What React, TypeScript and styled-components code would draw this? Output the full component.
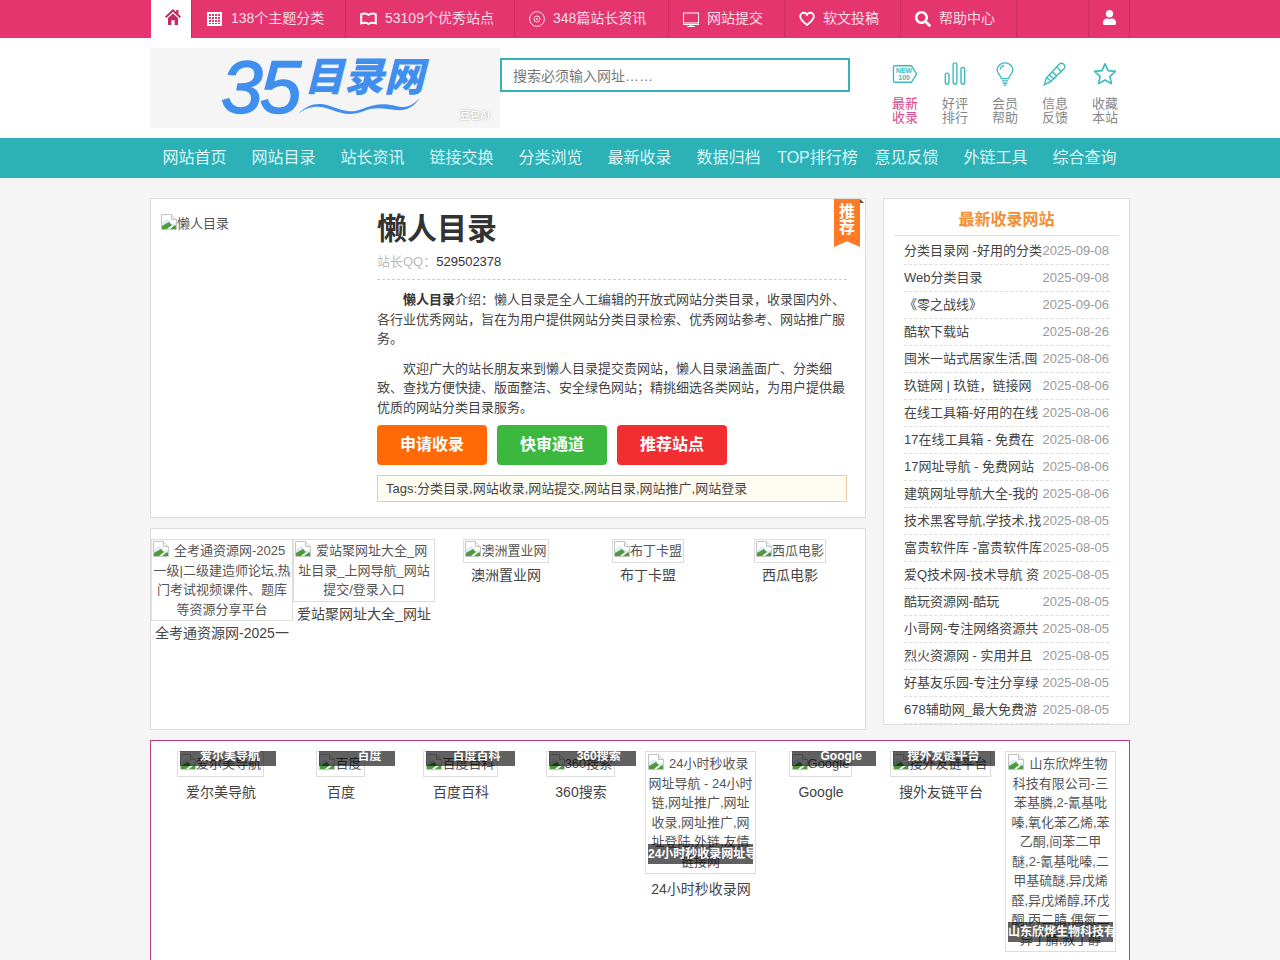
import React from 'react';
import styled, { createGlobalStyle } from 'styled-components';
import { FaSearch, FaUser } from 'react-icons/fa';

const GlobalStyle = createGlobalStyle`
  * { box-sizing: border-box; }
  html, body { margin: 0; padding: 0; }
  body {
    background: #f5f5f5;
    color: #333;
    font: 13px/19.5px "Liberation Sans", "Noto Sans CJK SC", sans-serif;
  }
`;

const Wrap = styled.div`
  width: 980px;
  margin: 0 auto;
`;

const TopBar = styled.div`
  height: 38px;
  background: #e5356f;
`;

const TopRow = styled(Wrap)`
  display: flex;
  height: 38px;
`;

const HomeTab = styled.a`
  width: 40px;
  margin-left: 1px;
  background: #fff;
  display: flex;
  justify-content: center;
  padding: 9px 0 0 4px;
`;

const TopItem = styled.a<{ $width: number; $first?: boolean }>`
  display: flex;
  align-items: center;
  gap: 8px;
  width: ${(p) => p.$width}px;
  height: 38px;
  padding-left: ${(p) => (p.$first ? 15 : 14)}px;
  border-left: 1px solid #c92c60;
  font-size: 14px;
  color: #fbdde7;
  white-space: nowrap;
  svg { display: block; flex: none; }
`;

const TopSpacer = styled.div`
  flex: 1;
  border-left: 1px solid #c92c60;
`;

const UserItem = styled.a`
  width: 42px;
  border-left: 1px solid #c92c60;
  border-right: 1px solid #c92c60;
  color: #fff;
  display: flex;
  justify-content: center;
  padding-top: 10px;
  font-size: 15px;
`;

const Header = styled.div`
  background: #fff;
  height: 100px;
`;

const HeaderRow = styled(Wrap)`
  display: flex;
  align-items: flex-start;
`;

const Logo = styled.a`
  position: relative;
  display: block;
  width: 350px;
  height: 80px;
  margin-top: 10px;
  background: #f5f5f5;
  overflow: hidden;
`;

const LogoNumber = styled.span`
  position: absolute;
  left: 71px;
  top: -1px;
  font: italic 400 75px/80px "Liberation Sans", sans-serif;
  letter-spacing: -3px;
  color: #408fee;
  -webkit-text-stroke: 1.5px #408fee;
`;

const LogoWords = styled.span`
  position: absolute;
  left: 154px;
  top: 4px;
  font: italic 900 40px/44px "Noto Sans CJK SC", sans-serif;
  color: #408fee;
`;

const LogoWave = styled.svg`
  position: absolute;
  left: 148px;
  top: 48px;
`;

const LogoMark = styled.span`
  position: absolute;
  right: 10px;
  bottom: 6px;
  font-size: 10px;
  line-height: 12px;
  font-weight: 700;
  color: #fff;
  text-shadow: 0 0 2px #999;
`;

const SearchInput = styled.input`
  width: 350px;
  height: 34px;
  margin-top: 20px;
  padding: 1px 11px 0;
  border: 2px solid #33b3b9;
  background: #fff;
  outline: none;
  font: 14px "Liberation Sans", "Noto Sans CJK SC", sans-serif;
  &::placeholder { color: #777; opacity: 1; }
`;

const QuickLinks = styled.div`
  display: flex;
  margin-left: 30px;
`;

const QuickLink = styled.a<{ $active?: boolean }>`
  width: 50px;
  padding-top: 24px;
  display: flex;
  flex-direction: column;
  align-items: center;
  font-size: 13px;
  line-height: 14px;
  text-align: center;
  color: ${(p) => (p.$active ? '#d9488c' : '#888')};
  svg { display: block; margin-bottom: 11px; }
`;

const NavBar = styled.div`
  height: 40px;
  background: #2cb1b6;
`;

const NavRow = styled(Wrap)`
  display: flex;
`;

const NavItem = styled.a`
  width: 89px;
  flex: none;
  font-size: 16px;
  line-height: 40px;
  text-align: center;
  white-space: nowrap;
  color: #dcf6f6;
`;

const Columns = styled(Wrap)`
  display: flex;
  align-items: flex-start;
  gap: 17px;
  margin-top: 20px;
`;

const MainColumn = styled.div`
  width: 716px;
  display: flex;
  flex-direction: column;
  gap: 10px;
`;

const Card = styled.div`
  position: relative;
  background: #fff;
  border: 1px solid #ddd;
`;

const SiteCard = styled(Card)`
  display: flex;
  height: 320px;
  padding: 10px 18px 0 10px;
`;

const SiteThumb = styled.div`
  width: 216px;
  padding-top: 5px;
  color: #555;
  svg { vertical-align: top; }
`;

const SiteInfo = styled.div`
  width: 470px;
`;

const SiteTitle = styled.h1`
  margin: 0;
  font-size: 30px;
  line-height: 40px;
  font-weight: 700;
  color: #333;
`;

const SiteMeta = styled.div`
  margin-top: 3px;
  padding-bottom: 7px;
  border-bottom: 1px dashed #ccc;
  line-height: 20px;
  color: #bbb;
  b { font-weight: 400; color: #333; }
`;

const Intro = styled.p`
  margin: 10px 0 0;
  text-indent: 2em;
  color: #444;
  b { color: #333; }
`;

const Buttons = styled.div`
  display: flex;
  gap: 10px;
  margin-top: 8px;
`;

const ActionButton = styled.a<{ $color: string }>`
  width: 110px;
  height: 40px;
  border-radius: 4px;
  background: ${(p) => p.$color};
  color: #fff;
  font-size: 16px;
  font-weight: 700;
  line-height: 40px;
  text-align: center;
`;

const Tags = styled.div`
  height: 27px;
  margin-top: 10px;
  padding: 0 8px;
  border: 1px solid #e6cf98;
  background: #fffdf2;
  line-height: 25px;
  color: #444;
`;

const Ribbon = styled.div`
  position: absolute;
  top: 0;
  right: 5px;
  width: 26px;
  height: 48px;
  padding-top: 5px;
  background: #ff7a26;
  clip-path: polygon(0 0, 100% 0, 100% 100%, 50% 88%, 0 100%);
  color: #fff;
  font-size: 16px;
  line-height: 16px;
  font-weight: 700;
  text-align: center;
`;

const RibbonFold = styled.div`
  position: absolute;
  top: 0;
  right: 1px;
  width: 0;
  height: 0;
  border-bottom: 4px solid #555;
  border-right: 4px solid transparent;
`;

const TileRow = styled(Card)`
  display: flex;
  align-items: flex-start;
  height: 202px;
  padding-top: 10px;
`;

const Tile = styled.a<{ $width: number }>`
  width: ${(p) => p.$width}px;
  flex: none;
  display: flex;
  flex-direction: column;
  align-items: center;
  text-align: center;
`;

const Thumb = styled.div<{ $tight?: boolean; $width?: number }>`
  position: relative;
  width: ${(p) => (p.$width ? `${p.$width}px` : 'auto')};
  margin-right: ${(p) => (p.$tight ? 0 : 1)}px;
  padding: ${(p) => (p.$tight ? '1px' : '2px')};
  border: 1px solid #ddd;
  color: #555;
  svg { vertical-align: top; }
`;

const FirstLine = styled.span<{ $trail: number }>`
  margin-right: ${(p) => p.$trail}px;
  white-space: nowrap;
  svg { margin-right: 5px; }
`;

const TileName = styled.div<{ $offset: number }>`
  width: 134px;
  margin-top: ${(p) => p.$offset}px;
  font-size: 14px;
  line-height: 24px;
  height: 24px;
  overflow: hidden;
  color: #444;
`;

const FriendPanel = styled.div`
  display: flex;
  align-items: flex-start;
  width: 980px;
  min-height: 300px;
  margin: 10px auto 0;
  padding: 10px;
  background: #fff;
  border: 1px solid #b93a7e;
`;

const TopCaption = styled.div<{ $width: number; $indent: number }>`
  position: absolute;
  top: -1px;
  left: 2px;
  width: ${(p) => p.$width}px;
  height: 15px;
  padding-left: ${(p) => p.$indent}px;
  overflow: hidden;
  background: rgba(0, 0, 0, 0.62);
  color: #fff;
  font-size: 12px;
  font-weight: 700;
  line-height: 10px;
  text-align: left;
  white-space: nowrap;
`;

const BottomCaption = styled.div`
  position: absolute;
  bottom: 9px;
  left: 2px;
  width: 105px;
  height: 20px;
  overflow: hidden;
  background: rgba(0, 0, 0, 0.62);
  color: #fff;
  font-size: 12px;
  font-weight: 700;
  line-height: 20px;
  text-align: left;
  white-space: nowrap;
`;

const Sidebar = styled.div`
  width: 247px;
  height: 527px;
  background: #fff;
  border: 1px solid #ddd;
`;

const SidebarTitle = styled.h3`
  height: 37px;
  margin: 0 10px 2px;
  border-bottom: 1px solid #ddd;
  color: #f58d33;
  font-size: 16px;
  font-weight: 700;
  line-height: 41px;
  text-align: center;
`;

const LatestRow = styled.a`
  display: flex;
  justify-content: space-between;
  height: 27px;
  margin: 0 20px;
  border-bottom: 1px dashed #ddd;
  line-height: 26px;
  color: #444;
`;

const LatestName = styled.span`
  width: 138px;
  height: 26px;
  overflow: hidden;
`;

const LatestDate = styled.span`
  color: #999;
`;

const Broken = () => (
  <svg width="16" height="16" viewBox="0 0 16 16">
    <path d="M.5.5h10l5 5v10H.5z" fill="#fff" stroke="#c4c4c4" />
    <path d="M10.5.5v5h5" fill="#eee" stroke="#c4c4c4" />
    <path d="M1 9l5-4 4 3-3 2 3 0 5-1v2L1 15z" fill="#c7dcf4" opacity="0.6" />
    <path d="M1 15v-3l7-4 3 3-5 4z" fill="#4f9a3a" />
    <path d="M9 15l5-4 1 1v3z" fill="#4f9a3a" />
  </svg>
);

const HomeIcon = () => (
  <svg width="16" height="16" viewBox="0 0 16 16" fill="#c42a63">
    <path d="M8 0l3.200 3V1H13.500v4.200L16 7.600 14.700 9 8 2.800 1.300 9 0 7.600z" />
    <path d="M8 4.500l5 4.600V16H9.600v-4.800H6.400V16H3V9.100z" />
  </svg>
);

const TopIcons = {
  grid: (
    <svg width="16" height="14" viewBox="0 0 16 14">
      <path
        d="M0 0h15v14H0zM2 2v2h2V2zm3 0v2h2V2zm3 0v2h2V2zm3 0v2h2V2zM2 5v2h2V5zm3 0v2h2V5zm3 0v2h2V5zm3 0v2h2V5zM2 8v2h2V8zm3 0v2h2V8zm3 0v2h2V8zm3 0v2h2V8zM2 11v1h2v-1zm3 0v1h2v-1zm3 0v1h2v-1zm3 0v1h2v-1z"
        fill="#fff"
        fillRule="evenodd"
      />
    </svg>
  ),
  book: (
    <svg width="17" height="14" viewBox="0 0 17 14">
      <path
        d="M1.200 2.200C3.500 1.200 6.500 1.200 8.500 3c2-1.800 5-1.800 7.300-.8v9.200c-2.400-.8-5.400-.7-7.300.6-1.900-1.300-4.900-1.400-7.300-.6z"
        fill="none"
        stroke="#fff"
        strokeWidth="2"
      />
    </svg>
  ),
  disc: (
    <svg width="16" height="16" viewBox="0 0 16 16" fill="none" stroke="#fbdde7">
      <circle cx="8" cy="8" r="7.400" />
      <circle cx="8" cy="8" r="3" />
      <circle cx="8" cy="8" r="1" fill="#fbdde7" stroke="none" />
    </svg>
  ),
  screen: (
    <svg width="16" height="15" viewBox="0 0 16 15" fill="none" stroke="#fff">
      <rect x="0.5" y="1" width="15" height="10" />
      <path d="M0 12.500h16M4 14.500h8" />
      <path d="M7 12v2M9 12v2" />
    </svg>
  ),
  heart: (
    <svg width="16" height="16" viewBox="0 0 17 16">
      <path
        d="M8.500 14.400C4 11 1.200 8.400 1.200 5.200 1.200 3 2.900 1.400 4.900 1.400c1.500 0 2.800.7 3.600 2 .8-1.300 2.100-2 3.600-2 2 0 3.700 1.600 3.700 3.800 0 3.200-2.800 5.800-7.300 9.200z"
        fill="none"
        stroke="#fff"
        strokeWidth="2"
      />
    </svg>
  ),
  search: <FaSearch size={16} color="#fff" />,
};

const TEAL = '#3dbac0';

const QuickIcons = {
  fresh: (
    <svg width="26" height="24" viewBox="0 0 28 26" fill="none" stroke={TEAL} strokeWidth="1.5">
      <path d="M3 4h18l5.500 9L21 22H3c-1 0-1.500-.6-1.500-1.500v-15C1.500 4.600 2 4 3 4z" />
      <text x="13" y="12" textAnchor="middle" fontSize="7.500" fontWeight="700" stroke="none" fill={TEAL} fontFamily="Liberation Sans">
        NEW
      </text>
      <text x="13" y="19" textAnchor="middle" fontSize="7.500" fontWeight="700" stroke="none" fill={TEAL} fontFamily="Liberation Sans">
        100
      </text>
    </svg>
  ),
  bars: (
    <svg width="24" height="24" viewBox="0 0 24 26" fill="none" stroke={TEAL} strokeWidth="1.5">
      <rect x="1.500" y="12" width="4" height="12" rx="2" />
      <rect x="10" y="1" width="4" height="23" rx="2" />
      <rect x="18.500" y="6" width="4" height="18" rx="2" />
    </svg>
  ),
  bulb: (
    <svg width="20" height="24" viewBox="0 0 20 26" fill="none" stroke={TEAL} strokeWidth="1.5">
      <path d="M6 18c0-3-4.500-5-4.500-9.500a8.500 7.500 0 0 1 17 0C18.500 13 14 15 14 18z" />
      <path d="M6.500 20.500h7M7.500 23h5M8.500 25h3" />
      <path d="M5 8c0-2.500 2-4 4-4" />
    </svg>
  ),
  pencil: (
    <svg width="26" height="24" viewBox="0 0 26 26" fill="none" stroke={TEAL} strokeWidth="1.5">
      <path d="M1.500 24.500l2-7L17.500 2.500c1.500-1.500 3.500-1.500 5 0s1.500 3.500 0 5L8 21.500z" />
      <path d="M3.500 17.500c2 0 4.500 2 4.500 4M15 5.500l5 5M10 10.500l5 5M7 14l5 4.500" />
    </svg>
  ),
  star: (
    <svg width="26" height="24" viewBox="0 0 26 26" fill="none" stroke={TEAL} strokeWidth="1.800" strokeLinejoin="round">
      <path d="M13 2l3.300 7.300 8 .9-6 5.300 1.700 7.900L13 19.400l-7 4 1.700-7.900-6-5.300 8-.9z" />
    </svg>
  ),
};

const topItems = [
  { icon: TopIcons.grid, label: '138个主题分类', width: 154 },
  { icon: TopIcons.book, label: '53109个优秀站点', width: 169 },
  { icon: TopIcons.disc, label: '348篇站长资讯', width: 154 },
  { icon: TopIcons.screen, label: '网站提交', width: 116 },
  { icon: TopIcons.heart, label: '软文投稿', width: 116 },
  { icon: TopIcons.search, label: '帮助中心', width: 116 },
];

const quickLinks = [
  { icon: QuickIcons.fresh, a: '最新', b: '收录', active: true },
  { icon: QuickIcons.bars, a: '好评', b: '排行' },
  { icon: QuickIcons.bulb, a: '会员', b: '帮助' },
  { icon: QuickIcons.pencil, a: '信息', b: '反馈' },
  { icon: QuickIcons.star, a: '收藏', b: '本站' },
];

const navItems = ['网站首页', '网站目录', '站长资讯', '链接交换', '分类浏览', '最新收录', '数据归档', 'TOP排行榜', '意见反馈', '外链工具', '综合查询'];

const latest = [
  ['分类目录网 -好用的分类目录', '2025-09-08'],
  ['Web分类目录', '2025-09-08'],
  ['《零之战线》', '2025-09-06'],
  ['酷软下载站', '2025-08-26'],
  ['囤米一站式居家生活,囤米', '2025-08-06'],
  ['玖链网 | 玖链，链接网', '2025-08-06'],
  ['在线工具箱-好用的在线工具', '2025-08-06'],
  ['17在线工具箱 - 免费在', '2025-08-06'],
  ['17网址导航 - 免费网站', '2025-08-06'],
  ['建筑网址导航大全-我的', '2025-08-06'],
  ['技术黑客导航,学技术,找资源', '2025-08-05'],
  ['富贵软件库 -富贵软件库', '2025-08-05'],
  ['爱Q技术网-技术导航 资', '2025-08-05'],
  ['酷玩资源网-酷玩', '2025-08-05'],
  ['小哥网-专注网络资源共', '2025-08-05'],
  ['烈火资源网 - 实用并且', '2025-08-05'],
  ['好基友乐园-专注分享绿', '2025-08-05'],
  ['678辅助网_最大免费游', '2025-08-05'],
];

const bestTiles = [
  { first: '全考通资源网-2025', rest: '一级|二级建造师论坛,热门考试视频课件、题库等资源分享平台', name: '全考通资源网-2025一级', width: 142 },
  { first: '爱站聚网址大全_网', rest: '址目录_上网导航_网站提交/登录入口', name: '爱站聚网址大全_网址目录', width: 142 },
  { first: '澳洲置业网', name: '澳洲置业网' },
  { first: '布丁卡盟', name: '布丁卡盟' },
  { first: '西瓜电影', name: '西瓜电影' },
];

const friendTiles = [
  { first: '爱尔美导航', name: '爱尔美导航', bar: 96, indent: 20 },
  { first: '百度', name: '百度', bar: 76, indent: 38 },
  { first: '百度百科', name: '百度百科', bar: 89, indent: 26 },
  { first: '360搜索', name: '360搜索', bar: 87, indent: 28 },
  { first: '24小时秒收录', rest: '网址导航 - 24小时链,网址推广,网址收录,网址推广,网址登陆,外链,友情链接网', name: '24小时秒收录网', caption: '24小时秒收录网址导航', width: 111 },
  { first: 'Google', name: 'Google', bar: 84, indent: 29 },
  { first: '搜外友链平台', name: '搜外友链平台', bar: 102, indent: 14 },
  { first: '山东欣烨生物', rest: '科技有限公司-三苯基膦,2-氰基吡嗪,氧化苯乙烯,苯乙酮,间苯二甲醚,2-氰基吡嗪,二甲基硫醚,异戊烯醛,异戊烯醇,环戊酮,丙二腈,偶氮二异丁腈,叔丁醇', name: '山东欣烨生物科技', caption: '山东欣烨生物科技有限公司', width: 111 },
];

const App: React.FC = () => {
  return (
    <>
      <GlobalStyle />
      <TopBar>
        <TopRow>
          <HomeTab>
            <HomeIcon />
          </HomeTab>
          {topItems.map((item, i) => (
            <TopItem key={item.label} $width={item.width} $first={i === 0}>
              {item.icon}
              {item.label}
            </TopItem>
          ))}
          <TopSpacer />
          <UserItem>
            <FaUser />
          </UserItem>
        </TopRow>
      </TopBar>

      <Header>
        <HeaderRow>
          <Logo>
            <LogoNumber>35</LogoNumber>
            <LogoWords>目录网</LogoWords>
            <LogoWave width="122" height="20" viewBox="0 0 122 20">
              <path
                d="M0 18C10 8 20 6 32 10s20 8 32 3 22-6 34-3 16-1 24-8c-6 9-14 13-24 12s-20-4-32 1-22 3-32-1S12 8 0 18z"
                fill="#408fee"
              />
            </LogoWave>
            <LogoMark>豆包AI</LogoMark>
          </Logo>
          <SearchInput placeholder="搜索必须输入网址……" />
          <QuickLinks>
            {quickLinks.map((link) => (
              <QuickLink key={link.a} $active={link.active}>
                {link.icon}
                <span>{link.a}</span>
                <span>{link.b}</span>
              </QuickLink>
            ))}
          </QuickLinks>
        </HeaderRow>
      </Header>

      <NavBar>
        <NavRow>
          {navItems.map((item) => (
            <NavItem key={item}>{item}</NavItem>
          ))}
        </NavRow>
      </NavBar>

      <Columns>
        <MainColumn>
          <SiteCard>
            <SiteThumb>
              <Broken />
              懒人目录
            </SiteThumb>
            <SiteInfo>
              <SiteTitle>懒人目录</SiteTitle>
              <SiteMeta>
                站长QQ：<b>529502378</b>
              </SiteMeta>
              <Intro>
                <b>懒人目录</b>介绍：懒人目录是全人工编辑的开放式网站分类目录，收录国内外、各行业优秀网站，旨在为用户提供网站分类目录检索、优秀网站参考、网站推广服务。
              </Intro>
              <Intro>
                欢迎广大的站长朋友来到懒人目录提交贵网站，懒人目录涵盖面广、分类细致、查找方便快捷、版面整洁、安全绿色网站；精挑细选各类网站，为用户提供最优质的网站分类目录服务。
              </Intro>
              <Buttons>
                <ActionButton $color="#ff6a07">申请收录</ActionButton>
                <ActionButton $color="#3db83f">快审通道</ActionButton>
                <ActionButton $color="#f12f31">推荐站点</ActionButton>
              </Buttons>
              <Tags>Tags:分类目录,网站收录,网站提交,网站目录,网站推广,网站登录</Tags>
            </SiteInfo>
            <Ribbon>
              推<br />荐
            </Ribbon>
            <RibbonFold />
          </SiteCard>

          <TileRow>
            {bestTiles.map((tile) => (
              <Tile key={tile.first} $width={142}>
                <Thumb $tight $width={tile.width}>
                  {tile.rest ? (
                    <>
                      <FirstLine $trail={7}>
                        <Broken />
                        {tile.first}
                      </FirstLine>
                      <br />
                      {tile.rest}
                    </>
                  ) : (
                    <>
                      <Broken />
                      {tile.first}
                    </>
                  )}
                </Thumb>
                <TileName $offset={0}>{tile.name}</TileName>
              </Tile>
            ))}
          </TileRow>
        </MainColumn>

        <Sidebar>
          <SidebarTitle>最新收录网站</SidebarTitle>
          {latest.map(([name, date]) => (
            <LatestRow key={name}>
              <LatestName>{name}</LatestName>
              <LatestDate>{date}</LatestDate>
            </LatestRow>
          ))}
        </Sidebar>
      </Columns>

      <FriendPanel>
        {friendTiles.map((tile) => (
          <Tile key={tile.first} $width={120}>
            <Thumb $width={tile.width}>
              {tile.rest ? (
                <>
                  <FirstLine $trail={5}>
                    <Broken />
                    {tile.first}
                  </FirstLine>
                  <br />
                  {tile.rest}
                </>
              ) : (
                <>
                  <Broken />
                  {tile.first}
                </>
              )}
              {tile.bar ? (
                <TopCaption $width={tile.bar} $indent={tile.indent ?? 0}>
                  {tile.first}
                </TopCaption>
              ) : (
                <BottomCaption>{tile.caption}</BottomCaption>
              )}
            </Thumb>
            <TileName $offset={3}>{tile.name}</TileName>
          </Tile>
        ))}
      </FriendPanel>
    </>
  );
};

export default App;
